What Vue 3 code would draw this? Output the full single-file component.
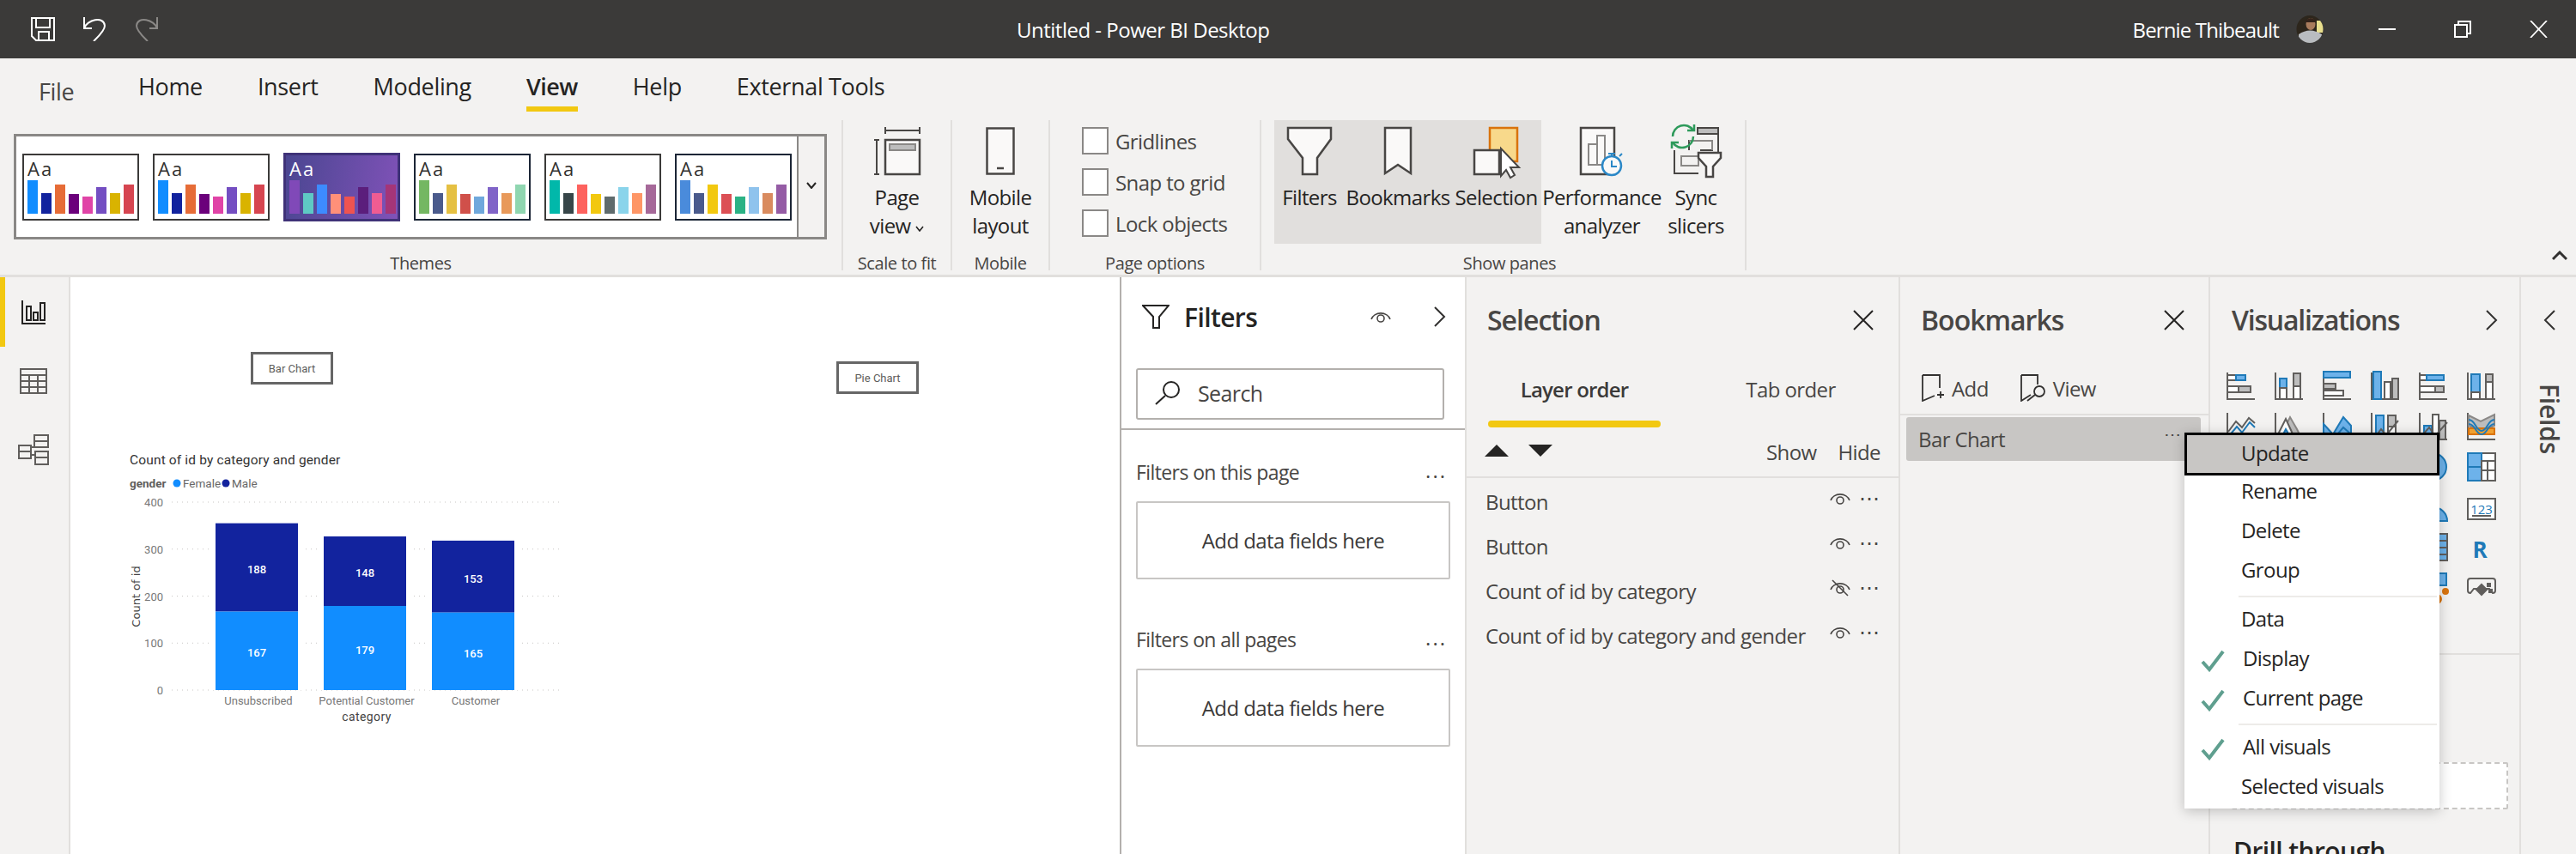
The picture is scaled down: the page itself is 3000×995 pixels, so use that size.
<script setup>
const D = '#605e5c', BL = '#6db2ea', BS = '#1f7ab8', G = '#bdbdbd', W = '#ffffff', O = '#d9730d'
const R = (x, y, w, h, f = W, s = D) => ({ d: `M${x} ${y}h${w}v${h}h${-w}z`, f, s })
const P = (d, f = 'none', s = D) => ({ d, f, s })
const ax = P('M1 1V32H33')

const tabs = ['Home', 'Insert', 'Modeling', 'View', 'Help', 'External Tools']

const base = ['#118dff', '#12239e', '#e66c37', '#6b007b', '#e044a7', '#744ec2', '#d9b300', '#d64550']
const themes = [
  { colors: base },
  { colors: base },
  { colors: ['#8049b8', '#5ec9c4', '#3d8bff', '#ff9079', '#ef5350', '#5b1e7c', '#f05c92', '#a43578'], dark: true },
  { colors: ['#74b762', '#4a5a8c', '#e5c042', '#d0504a', '#6fa8dc', '#8064c8', '#e8995a', '#8fd6b0'], navy: true },
  { colors: ['#01b8aa', '#374649', '#fd625e', '#f2c80f', '#5f6b6d', '#8ad4eb', '#fe9666', '#a66999'] },
  { colors: ['#4a8bdb', '#4a5a8c', '#f2c80f', '#dc4f55', '#2bb285', '#8fc3ed', '#d98b5f', '#955ca5'], navy: true }
]
const themeHeights = [39, 24, 34, 23, 20, 31, 24, 34]

const checks = ['Gridlines', 'Snap to grid', 'Lock objects']

const layers = [
  { name: 'Button' },
  { name: 'Button' },
  { name: 'Count of id by category', hidden: true },
  { name: 'Count of id by category and gender' }
]

const menu = [
  { label: 'Update', hover: true },
  { label: 'Rename' },
  { label: 'Delete' },
  { label: 'Group', sepAfter: true },
  { label: 'Data' },
  { label: 'Display', check: true },
  { label: 'Current page', check: true, sepAfter: true },
  { label: 'All visuals', check: true },
  { label: 'Selected visuals' }
]

const Y = v => 804 - v * 0.5475
const grid = [400, 300, 200, 100, 0]
const series = [
  { name: 'Unsubscribed', x: 251, f: 167, m: 188, fy: 760, my: 663, cx: 301 },
  { name: 'Potential Customer', x: 377, f: 179, m: 148, fy: 757, my: 667, cx: 427 },
  { name: 'Customer', x: 503, f: 165, m: 153, fy: 761, my: 674, cx: 554 }
]

const vizIcons = [
  [ax, R(1, 4, 10, 6), R(11, 4, 11, 6, BL, BS), R(1, 17, 13, 7), R(14, 17, 14, 7, G)],
  [ax, R(6, 8, 8, 11, BL, BS), R(6, 19, 8, 13), R(22, 2, 8, 15, G), R(22, 17, 8, 15)],
  [P('M1 0V32H33'), R(1, 0, 31, 7, BL, BS), R(1, 14, 14, 6, G), R(1, 22, 23, 6)],
  [ax, R(3, 0, 9, 32, BL, BS), R(16, 12, 7, 20), R(25, 8, 7, 24, G)],
  [ax, R(1, 4, 8, 6), R(9, 4, 20, 6, BL, BS), R(1, 17, 18, 7), R(19, 17, 10, 7, G)],
  [ax, R(5, 3, 10, 21, BL, BS), R(5, 24, 10, 8), R(22, 3, 8, 9, G), R(22, 12, 8, 20)],
  [ax, P('M2 23L11 11L18 18L26 7L33 13'), P('M2 29L12 17L18 24L27 12L33 18', 'none', BS)],
  [ax, P('M14 32L10 22L18 6L26 20L32 32', G, '#8a8886'), P('M1 32L13 8L24 32Z', W), P('M7 32L13 20L20 32Z', BL, BS)],
  [ax, P('M1 14L12 26L24 6L33 16V32H1Z', BL, BS), P('M1 24L12 32L24 18L33 26', 'none', BS)],
  [ax, R(6, 4, 9, 28, BL, BS), R(20, 4, 9, 13, G), R(20, 17, 9, 15), P('M3 32L12 20L18 27L32 10')],
  [ax, R(6, 16, 9, 16, BL, BS), R(16, 3, 7, 29), R(24, 10, 7, 22, G), P('M3 28L12 18L19 28L33 12')],
  [P('M1 1V32H33'), P('M2 4L16 11L32 3V16L16 22L2 16Z', G, '#8a8886'), R(2, 19, 30, 7, '#f0a030', O), P('M2 9C10 9 10 22 17 22S24 9 32 9', 'none', BS), P('M2 14C10 14 10 26 17 26S24 14 32 14', 'none', BS)],
  [], [], [], [], [P('M16 1A16 16 0 1 1 16 33A16 16 0 1 1 16 1Z', BL, BS)],
  [R(1, 1, 32, 32, W), R(1, 1, 16, 16, BL, BS), R(1, 17, 16, 16, BL, BS), R(17, 10, 16, 23, W), P('M17 10H33M24 10V33M17 21H33')],
  [], [], [], [], [P('M1 33A16 16 0 0 1 33 33Z', BL, BS)],
  [R(1, 7, 32, 24, W), P('M6 27H28', 'none', D)],
  [], [], [], [], [R(1, 1, 32, 31, BL, D), P('M1 9H33M1 17H33M1 25H33M10 1V32')], [],
  [], [], [], [], [R(10, 0, 22, 14, BL, BS), { d: 'M28 21a3 3 0 1 0 6 0a3 3 0 1 0-6 0M16 30a5 5 0 1 0 10 0a5 5 0 1 0-10 0', f: O, s: O }],
  [P('M4 6H30Q33 6 33 9V20Q33 23 30 23L26 18H8L4 23Q1 23 1 20V9Q1 6 4 6Z'), P('M17 13L23 19L17 25L11 19Z', D, D), R(24, 12, 3, 3, D, D), R(26, 19, 3, 3, D, D)]
]
</script>

<template>
  <div class="app">
    <header class="titlebar">
      <div class="qa">
        <svg class="qa-save" width="28" height="28" viewBox="0 0 28 28"><path d="M1 1H27V27H6L1 22Z M6 1V12H22V1 M9 27V17H21V27" fill="none" stroke="#fff" stroke-width="2"/></svg>
        <svg width="27" height="28" viewBox="0 0 27 28"><path d="M1 0V13H10 M1 13C4 3 24 -2 25 10C25 16 16 24 12 28" fill="none" stroke="#fff" stroke-width="2"/></svg>
        <svg width="27" height="28" viewBox="0 0 27 28"><path d="M26 0V13H17 M26 13C23 3 3 -2 2 10C2 16 11 24 15 28" fill="none" stroke="#8a8886" stroke-width="2"/></svg>
      </div>
      <div class="title">Untitled - Power BI Desktop</div>
      <div class="tb-right">
        <span class="user">Bernie Thibeault</span>
        <svg class="avatar" width="32" height="32" viewBox="0 0 32 32">
          <defs><clipPath id="av"><ellipse cx="16" cy="16" rx="15.5" ry="16"/></clipPath></defs>
          <g clip-path="url(#av)">
            <rect width="32" height="32" fill="#2d261c"/>
            <rect x="24" y="6" width="8" height="14" fill="#e9df8e"/>
            <ellipse cx="17" cy="10" rx="5.5" ry="7" fill="#a97b5c"/>
            <path d="M11 6Q17 0 23 6V8H11Z" fill="#33231a"/>
            <path d="M3 32V22Q16 13 30 22V32Z" fill="#b9bcc0"/>
          </g>
        </svg>
        <span class="win-min"></span>
        <svg width="20" height="20" viewBox="0 0 20 20"><path d="M5 4V1H19V15H15 M1 5H15V19H1Z" fill="none" stroke="#fff" stroke-width="2"/></svg>
        <svg width="21" height="20" viewBox="0 0 21 20"><path d="M1 0L20 20M20 0L1 20" stroke="#fff" stroke-width="1.8"/></svg>
      </div>
    </header>

    <section class="ribbon">
      <nav class="tabs">
        <span class="tab file">File</span>
        <span v-for="t in tabs" :key="t" class="tab" :class="{ active: t === 'View' }">{{ t }}</span>
      </nav>
      <div class="groups">
        <div class="group g-themes">
          <div class="body">
            <div class="gallery">
              <div class="thumbs">
                <div v-for="(th, i) in themes" :key="i" class="thumb" :class="{ dark: th.dark, navy: th.navy }">
                  <span class="aa">Aa</span>
                  <div class="tbars">
                    <i v-for="(c, j) in th.colors" :key="j" :style="{ background: c, height: themeHeights[j] + 'px' }"></i>
                  </div>
                </div>
              </div>
              <div class="gal-more"><svg width="12" height="8" viewBox="0 0 12 8"><path d="M1 1L6 7L11 1" fill="none" stroke="#252423" stroke-width="2"/></svg></div>
            </div>
          </div>
          <div class="glabel">Themes</div>
        </div>

        <div class="group g-scale">
          <div class="body">
            <div class="rbtn full">
              <svg width="54" height="56" viewBox="0 0 54 56">
                <path d="M13 0V8M53 0V8M13 4H53M3 15V55M0 15H6M0 55H6" fill="none" stroke="#484644" stroke-width="2"/>
                <rect x="13" y="15" width="40" height="40" fill="#faf9f8" stroke="#484644" stroke-width="2.5"/>
                <rect x="18" y="20" width="30" height="7" fill="#bdbdbd" stroke="#8a8886" stroke-width="2"/>
              </svg>
              <div class="rtext">Page<br />view <svg width="10" height="7" viewBox="0 0 10 7"><path d="M1 1L5 6L9 1" fill="none" stroke="#252423" stroke-width="1.6"/></svg></div>
            </div>
          </div>
          <div class="glabel">Scale to fit</div>
        </div>

        <div class="group g-mobile">
          <div class="body">
            <div class="rbtn full">
              <svg width="34" height="56" viewBox="0 0 34 56">
                <rect x="1.5" y="1.5" width="31" height="53" fill="#faf9f8" stroke="#484644" stroke-width="2.5"/>
                <path d="M13 48H21" stroke="#484644" stroke-width="2.5"/>
              </svg>
              <div class="rtext">Mobile<br />layout</div>
            </div>
          </div>
          <div class="glabel">Mobile</div>
        </div>

        <div class="group g-options">
          <div class="body">
            <div class="checks">
              <label v-for="c in checks" :key="c" class="check"><i></i>{{ c }}</label>
            </div>
          </div>
          <div class="glabel">Page options</div>
        </div>

        <div class="group g-panes">
          <div class="body panes-row">
            <div class="hl">
              <div class="rbtn w-filters">
                <svg width="52" height="56" viewBox="0 0 52 56"><path d="M1 1H51V14L35 36V55H18V36L1 14Z" fill="#faf9f8" stroke="#484644" stroke-width="2.5"/></svg>
                <div class="rtext">Filters</div>
              </div>
              <div class="rbtn w-book">
                <svg width="32" height="56" viewBox="0 0 32 56"><path d="M1 1H31V54L16 44L1 54Z" fill="#faf9f8" stroke="#484644" stroke-width="2.5"/></svg>
                <div class="rtext">Bookmarks</div>
              </div>
              <div class="rbtn w-sel">
                <svg width="54" height="56" viewBox="0 0 54 56" class="sel-ico">
                  <rect x="19" y="1" width="32" height="39" fill="#f8d98b" stroke="#d9730d" stroke-width="2.5"/>
                  <rect x="1" y="27" width="29" height="28" fill="#faf9f8" stroke="#484644" stroke-width="2.5"/>
                  <path d="M32 25V57L38 50L43 59L48 56L43 47L53 47Z" fill="#fff" stroke="#484644" stroke-width="2"/>
                </svg>
                <div class="rtext">Selection</div>
              </div>
            </div>
            <div class="rbtn w-perf">
              <svg width="52" height="56" viewBox="0 0 52 56" class="over">
                <rect x="1" y="1" width="39" height="54" fill="#faf9f8" stroke="#484644" stroke-width="2.5"/>
                <path d="M10 44V20H20V44ZM20 20V10H29V44H20" fill="none" stroke="#8a8886" stroke-width="2"/>
                <circle cx="37" cy="45" r="11" fill="#faf9f8" stroke="#2b88c7" stroke-width="2.5"/>
                <path d="M37 39V46H43M33 31H41M37 31V34M46 34L49 31" fill="none" stroke="#2b88c7" stroke-width="2"/>
              </svg>
              <div class="rtext">Performance<br />analyzer</div>
            </div>
            <div class="rbtn w-sync">
              <svg width="60" height="56" viewBox="0 5 60 56" class="sync-ico">
                <path d="M5 32V59H33M22 32V21H49V32H35M56 6V35M13 39H33V50H13Z" fill="none" stroke="#484644" stroke-width="2"/>
                <path d="M22 21H49V32" fill="none" stroke="#8a8886" stroke-width="2"/>
                <path d="M13 39H33V50H13Z" fill="none" stroke="#8a8886" stroke-width="2"/>
                <rect x="32" y="6" width="24" height="7" fill="#bdbdbd" stroke="#484644" stroke-width="2"/>
                <path d="M3 16A13 13 0 0 1 27 9M27 16A13 13 0 0 1 3 23" fill="none" stroke="#2e9a5b" stroke-width="2.5"/>
                <path d="M20 9H28V2M10 23H2V30" fill="none" stroke="#2e9a5b" stroke-width="2.5"/>
                <path d="M33 35H59V41L50 51V63H42V51L33 41Z" fill="#faf9f8" stroke="#484644" stroke-width="2.5"/>
              </svg>
              <div class="rtext">Sync<br />slicers</div>
            </div>
          </div>
          <div class="glabel">Show panes</div>
        </div>

        <svg class="collapse" width="18" height="12" viewBox="0 0 18 12"><path d="M1 10L9 2L17 10" fill="none" stroke="#323130" stroke-width="3"/></svg>
      </div>
    </section>

    <main class="main">
      <aside class="nav">
        <div class="nav-item on">
          <svg width="28" height="28" viewBox="0 0 28 28"><path d="M1 0V27H28" fill="none" stroke="#252423" stroke-width="2"/><path d="M6 7H11V23H6ZM14 14H19V23H14ZM22 3H27V23H22Z" fill="none" stroke="#252423" stroke-width="2"/></svg>
        </div>
        <div class="nav-item">
          <svg width="32" height="30" viewBox="0 0 32 30"><path d="M1 1H31V29H1ZM1 8H31M1 15H31M1 22H31M11 8V29M21 8V29" fill="none" stroke="#605e5c" stroke-width="2"/></svg>
        </div>
        <div class="nav-item">
          <svg width="36" height="36" viewBox="0 0 36 36"><path d="M19 1H35V15H19ZM19 8H35M1 13H15V28H1ZM1 20H15M20 20H35V35H20ZM20 27H35M15 15H19M15 24H20" fill="none" stroke="#605e5c" stroke-width="2"/></svg>
        </div>
      </aside>

      <div class="canvas">
        <div class="vbtn bar-btn">Bar Chart</div>
        <div class="vbtn pie-btn">Pie Chart</div>
        <svg class="chart" width="530" height="330" viewBox="142 520 530 330">
          <text x="151" y="541" class="c-title">Count of id by category and gender</text>
          <text x="151" y="568" class="c-legend-h">gender</text>
          <circle cx="206" cy="563" r="4.5" fill="#118dff"/>
          <text x="213" y="568" class="c-legend">Female</text>
          <circle cx="263" cy="563" r="4.5" fill="#12239e"/>
          <text x="270" y="568" class="c-legend">Male</text>

          <g v-for="g in grid" :key="g">
            <line x1="200" x2="655" :y1="Y(g)" :y2="Y(g)" stroke="#c8c6c4" stroke-width="1" stroke-dasharray="1 5"/>
            <text x="190" :y="Y(g) + 5" text-anchor="end" class="c-axis">{{ g }}</text>
          </g>
          <text transform="translate(163 695) rotate(-90)" text-anchor="middle" class="c-ylabel">Count of id</text>

          <g v-for="s in series" :key="s.name">
            <rect :x="s.x - 5" :y="Y(s.f + s.m)" width="106" :height="s.f * 0.5475 + s.m * 0.5475" fill="#fff"/>
            <rect :x="s.x" :y="Y(s.f + s.m)" width="96" :height="s.m * 0.5475" fill="#12239e"/>
            <rect :x="s.x" :y="Y(s.f)" width="96" :height="s.f * 0.5475" fill="#118dff"/>
            <text :x="s.x + 48" :y="s.my + 5" text-anchor="middle" class="c-val">{{ s.m }}</text>
            <text :x="s.x + 48" :y="s.fy + 5" text-anchor="middle" class="c-val">{{ s.f }}</text>
            <text :x="s.cx" y="821" text-anchor="middle" class="c-axis">{{ s.name }}</text>
          </g>
          <text x="427" y="840" text-anchor="middle" class="c-xlabel">category</text>
        </svg>
      </div>

      <section class="filters">
        <div class="f-head">
          <svg width="32" height="28" viewBox="0 0 32 28"><path d="M1 1H31L20 14V27H13V14Z" fill="none" stroke="#252423" stroke-width="2"/></svg>
          <span class="f-title">Filters</span>
          <svg class="f-eye" width="24" height="16" viewBox="0 0 24 16"><path d="M1 11A11.5 10 0 0 1 23 11" fill="none" stroke="#484644" stroke-width="1.6"/><circle cx="12" cy="10" r="4" fill="none" stroke="#484644" stroke-width="1.6"/></svg>
          <svg class="f-chev" width="15" height="24" viewBox="0 0 15 24"><path d="M2 1L13 12L2 23" fill="none" stroke="#323130" stroke-width="2"/></svg>
        </div>
        <div class="search">
          <svg width="30" height="28" viewBox="0 0 30 28"><circle cx="19" cy="10" r="9" fill="none" stroke="#252423" stroke-width="2"/><path d="M12 17L1 27" stroke="#252423" stroke-width="2"/></svg>
          <span>Search</span>
        </div>
        <div class="f-divider"></div>
        <div class="f-sec first"><span>Filters on this page</span><span class="dots">...</span></div>
        <div class="f-box">Add data fields here</div>
        <div class="f-sec"><span>Filters on all pages</span><span class="dots">...</span></div>
        <div class="f-box">Add data fields here</div>
      </section>

      <section class="pane selection">
        <div class="p-head">
          <span>Selection</span>
          <svg width="24" height="24" viewBox="0 0 24 24"><path d="M1 1L23 23M23 1L1 23" stroke="#252423" stroke-width="2"/></svg>
        </div>
        <div class="s-tabs">
          <div class="s-tab on">Layer order<i></i></div>
          <div class="s-tab">Tab order</div>
        </div>
        <div class="s-tools">
          <svg width="28" height="14" viewBox="0 0 28 14"><path d="M14 0L28 14H0Z" fill="#252423"/></svg>
          <svg class="down" width="28" height="14" viewBox="0 0 28 14"><path d="M14 14L28 0H0Z" fill="#252423"/></svg>
          <span class="show">Show</span>
          <span class="hide">Hide</span>
        </div>
        <div class="layers">
          <div v-for="(l, i) in layers" :key="i" class="layer">
            <span>{{ l.name }}</span>
            <svg class="l-eye" width="24" height="20" viewBox="0 0 24 20">
              <path d="M1 12A11.5 10 0 0 1 23 12" fill="none" stroke="#484644" stroke-width="1.6"/>
              <circle cx="12" cy="12" r="4" fill="none" stroke="#484644" stroke-width="1.6"/>
              <path v-if="l.hidden" d="M3 1L21 19" stroke="#484644" stroke-width="1.6"/>
            </svg>
            <span class="l-dots">&#8943;</span>
          </div>
        </div>
      </section>

      <section class="pane bookmarks">
        <div class="p-head">
          <span>Bookmarks</span>
          <svg width="24" height="24" viewBox="0 0 24 24"><path d="M1 1L23 23M23 1L1 23" stroke="#252423" stroke-width="2"/></svg>
        </div>
        <div class="b-tools">
          <svg width="26" height="32" viewBox="0 0 26 32"><path d="M1 1H21V16M15 25L1 31V1M18 24H26M22 20V28" fill="none" stroke="#323130" stroke-width="1.8"/></svg>
          <span class="b-add">Add</span>
          <svg class="b-vi" width="30" height="32" viewBox="0 0 30 32"><path d="M1 1H20V12M12 24L1 31V1" fill="none" stroke="#323130" stroke-width="1.8"/><circle cx="22" cy="20" r="6" fill="none" stroke="#323130" stroke-width="1.8"/><path d="M17 24L8 31" stroke="#323130" stroke-width="1.8"/></svg>
          <span class="b-view">View</span>
        </div>
        <div class="b-row"><span>Bar Chart</span><span class="b-dots">&#8943;</span></div>
      </section>

      <section class="pane viz">
        <div class="p-head">
          <span>Visualizations</span>
          <svg width="15" height="24" viewBox="0 0 15 24"><path d="M2 1L13 12L2 23" fill="none" stroke="#323130" stroke-width="2"/></svg>
        </div>
        <div class="viz-grid">
          <div v-for="(icon, i) in vizIcons" :key="i" class="viz-cell">
            <svg width="34" height="34" viewBox="0 0 34 34">
              <path v-for="(s, j) in icon" :key="j" :d="s.d" :fill="s.f" :stroke="s.s" stroke-width="2"/>
              <text v-if="i === 23" x="17" y="25" text-anchor="middle" class="v-num">123</text>
              <text v-if="i === 29" x="15" y="29" text-anchor="middle" class="v-r">R</text>
            </svg>
          </div>
        </div>
        <div class="v-divider"></div>
        <div class="v-drop"></div>
        <div class="v-drill">Drill through</div>
      </section>

      <aside class="fields">
        <svg width="15" height="24" viewBox="0 0 15 24"><path d="M13 1L2 12L13 23" fill="none" stroke="#323130" stroke-width="2"/></svg>
        <span>Fields</span>
      </aside>
    </main>

    <div class="menu">
      <template v-for="m in menu" :key="m.label">
        <div class="m-row" :class="{ hover: m.hover, checked: m.check }">
          <svg v-if="m.check" width="28" height="26" viewBox="0 0 28 26"><path d="M2 14L10 23L26 2" fill="none" stroke="#5f9f8f" stroke-width="4"/></svg>
          <span>{{ m.label }}</span>
        </div>
        <div v-if="m.sepAfter" class="m-sep"></div>
      </template>
    </div>
  </div>
</template>

<style>
html, body { margin: 0; background: #fff; }
</style>

<style scoped>
* { box-sizing: border-box; }
.app {
  position: relative;
  width: 3000px;
  height: 995px;
  overflow: hidden;
  display: flex;
  flex-direction: column;
  font-family: "Open Sans", "Liberation Sans", sans-serif;
  letter-spacing: -0.6px;
  color: #252423;
  background: #fff;
}

/* Title bar */
.titlebar {
  height: 68px;
  flex: none;
  background: #3b3a39;
  display: flex;
  align-items: center;
  padding: 0 33px 0 36px;
  color: #fff;
}
.qa { display: flex; gap: 33px; align-items: center; width: 148px; margin-right: 1000px; }
.title { font-size: 24px; white-space: nowrap; letter-spacing: -0.5px; }
.tb-right { margin-left: auto; display: flex; align-items: center; }
.user { font-size: 24px; letter-spacing: -0.85px; }
.avatar { margin-left: 20px; }
.win-min { width: 20px; height: 2px; background: #fff; margin: 0 68px 0 64px; }
.tb-right svg:last-child { margin-left: 68px; }

/* Ribbon */
.ribbon { height: 252px; flex: none; background: #f3f2f1; display: flex; flex-direction: column; }
.tabs { height: 72px; flex: none; display: flex; gap: 64px; padding: 13px 0 0 161px; position: relative; }
.tab { font-size: 27px; line-height: 40px; height: 49px; white-space: nowrap; padding-bottom: 3px; letter-spacing: -0.35px; }
.tab.active { border-bottom: 6px solid #f2c811; font-weight: 600; letter-spacing: -0.5px; }
.tab.file { position: absolute; left: 45px; top: 19px; color: #484644; }
.groups { display: flex; height: 175px; position: relative; }
.group { flex: none; display: flex; flex-direction: column; border-right: 2px solid #e1dfdd; }
.body { flex: 1; min-height: 0; }
.glabel { height: 16px; line-height: 16px; font-size: 20px; text-align: center; color: #484644; white-space: nowrap; letter-spacing: -0.4px; margin-bottom: 0; }
.g-themes { width: 982px; padding-left: 16px; }
.g-themes .glabel { padding-right: 16px; }
.g-scale { width: 127px; }
.g-mobile { width: 114px; }
.g-options { width: 246px; }
.g-panes { width: 565px; padding-left: 15px; }

.gallery { margin-top: 16px; width: 947px; height: 123px; border: 3px solid #8a8886; background: #fff; display: flex; }
.thumbs { flex: 1; display: flex; gap: 16px; padding: 20px 0 0 7px; }
.thumb { width: 136px; height: 78px; border: 2px solid #3b3a39; background: #fff; padding: 0 0 6px 4px; display: flex; flex-direction: column; justify-content: space-between; overflow: hidden; }
.thumb.navy { border-color: #1b2536; }
.thumb.dark { border: 3px solid #3f3278; background: linear-gradient(100deg, #4a4691, #8052b8); height: 80px; margin-top: -1px; }
.aa { font-size: 22px; line-height: 30px; letter-spacing: 2px; color: #323130; }
.dark .aa { color: #fff; }
.tbars { display: flex; align-items: flex-end; gap: 4.5px; margin-top: -6px; }
.tbars i { width: 11.5px; display: block; flex: none; }
.gal-more { width: 32px; border-left: 2px solid #8a8886; background: #f3f2f1; display: flex; align-items: center; justify-content: center; padding-bottom: 4px; }

.rbtn { display: flex; flex-direction: column; align-items: center; padding-top: 8px; flex: none; }
.rbtn.full { width: 100%; }
.rbtn > svg { flex: none; display: block; height: 56px; overflow: visible; }
.rtext { margin-top: 9px; font-size: 24px; line-height: 33px; text-align: center; white-space: nowrap; }
.rtext svg { vertical-align: 2px; }

.checks { display: flex; flex-direction: column; gap: 16px; padding: 8px 0 0 37px; }
.check { display: flex; align-items: center; height: 32px; font-size: 24px; white-space: nowrap; color: #484644; }
.check i { width: 31px; height: 32px; border: 2px solid #8a8886; background: #fff; margin-right: 8px; flex: none; }

.panes-row { display: flex; align-items: flex-start; }
.hl { display: flex; width: 311px; height: 144px; background: #e1dfdd; }
.w-filters { width: 82px; }
.w-book { width: 124px; }
.w-sel { width: 105px; }
.w-perf { width: 141px; }
.w-sync { width: 78px; }
.collapse { position: absolute; right: 10px; top: 152px; }

/* Main */
.main { flex: 1; min-height: 0; display: flex; border-top: 3px solid #e1dfdd; }
.nav { width: 82px; flex: none; background: #f3f2f1; border-right: 2px solid #e1dfdd; }
.nav-item { height: 80px; display: flex; align-items: center; justify-content: center; padding-right: 2px; }
.nav-item.on { height: 81px; border-left: 6px solid #f2c811; padding-right: 8px; }

.canvas { width: 1222px; flex: none; position: relative; background: #fff; }
.vbtn {
  position: absolute;
  border: 3px solid #666;
  background: #fff;
  font-size: 13px;
  color: #605e5c;
  letter-spacing: 0;
  display: flex;
  align-items: center;
  justify-content: center;
  font-family: "Roboto", sans-serif;
}
.bar-btn { left: 210px; top: 87px; width: 96px; height: 38px; }
.pie-btn { left: 892px; top: 98px; width: 96px; height: 38px; }
.chart { position: absolute; left: 60px; top: 197px; }
.chart text { font-family: "Roboto", sans-serif; letter-spacing: 0; }
.chart .c-title { font-size: 15.5px; fill: #333; letter-spacing: 0.15px; }
.c-legend-h { font-size: 13.5px; font-weight: 700; fill: #605e5c; }
.c-legend { font-size: 13.5px; fill: #666; }
.c-axis { font-size: 13px; fill: #777; }
.chart .c-ylabel { font-size: 13px; fill: #444; font-family: "DejaVu Sans", sans-serif; }
.chart .c-xlabel { font-size: 14px; fill: #444; letter-spacing: 0.4px; }
.c-val { font-size: 13px; fill: #fff; font-weight: 500; }

/* Filters */
.filters { width: 404px; flex: none; background: #fff; border-left: 2px solid #b3b0ad; border-right: 2px solid #e1dfdd; }
.f-head { height: 92px; display: flex; align-items: center; padding-left: 24px; }
.f-title { font-size: 30px; font-weight: 600; margin-left: 17px; }
.f-eye { margin-left: auto; }
.f-chev { margin: 0 22px 0 49px; }
.search { margin: 14px 0 0 17px; width: 359px; height: 60px; border: 2px solid #b3b0ad; border-radius: 3px; display: flex; align-items: center; padding: 0 0 2px 20px; font-size: 25px; color: #484644; }
.search span { margin-left: 20px; }
.f-divider { height: 2px; background: #b3b0ad; margin-top: 10px; }
.f-sec { height: 40px; margin: 51px 15px 0 17px; display: flex; align-items: center; justify-content: space-between; font-size: 23px; color: #484644; padding-bottom: 3px; }
.f-sec.first { margin-top: 30px; }
.dots { font-size: 24px; letter-spacing: 2px; line-height: 20px; padding-right: 6px; position: relative; top: -2px; }
.f-box { margin: 13px 0 0 17px; width: 366px; height: 91px; border: 2px solid #c8c6c4; border-radius: 2px; display: flex; align-items: center; justify-content: center; font-size: 24px; color: #3b3a39; }

/* Panes */
.pane { flex: none; background: #f3f2f1; border-right: 2px solid #e1dfdd; overflow: hidden; }
.selection { width: 505px; }
.bookmarks { width: 361px; }
.viz { width: 362px; }
.p-head { height: 102px; display: flex; align-items: center; justify-content: space-between; padding: 0 29px 3px 24px; font-size: 32px; font-weight: 600; color: #484644; letter-spacing: -1px; }

.s-tabs { display: flex; padding-left: 25px; gap: 51px; height: 73px; font-size: 24px; text-align: center; }
.s-tab { width: 201px; line-height: 58px; position: relative; color: #484644; }
.s-tab.on { font-weight: 600; color: #3b3a39; letter-spacing: -0.8px; }
.s-tab i { display: block; height: 8px; margin-top: 7px; background: #f2c811; border-radius: 4px; }
.s-tools { height: 59px; border-bottom: 2px solid #e1dfdd; display: flex; align-items: center; padding: 0 21px 4px 21px; font-size: 24px; color: #484644; }
.s-tools span { position: relative; top: 2px; }
.s-tools .down { margin-left: 23px; }
.show { margin-left: auto; }
.hide { margin-left: 25px; }
.layers { padding-top: 1px; }
.layer { height: 52px; display: flex; align-items: center; padding-left: 22px; font-size: 24px; color: #484644; position: relative; }
.l-eye { margin-left: auto; margin-right: 10px; position: relative; top: -3px; flex: none; }
.l-dots { width: 24px; margin-right: 22px; font-size: 24px; line-height: 20px; letter-spacing: 0; position: relative; top: -4px; text-align: center; }

.bookmarks .p-head { padding-right: 28px; }
.b-tools { height: 59px; border-bottom: 2px solid #e1dfdd; display: flex; align-items: center; padding: 0 0 3px 25px; font-size: 24px; color: #484644; }
.b-add { margin-left: 9px; }
.b-vi { margin-left: 37px; }
.b-view { margin-left: 8px; }
.b-row { margin: 2px 9px 0 7px; height: 51px; background: #c8c6c4; border-radius: 3px; display: flex; align-items: center; justify-content: space-between; padding: 0 24px 0 14px; font-size: 24px; color: #484644; }
.b-dots { font-size: 20px; position: relative; top: -6px; }

.viz .p-head { padding: 0 25px 3px 25px; letter-spacing: -1.2px; }
.viz-grid { margin: 8px 0 0 19px; display: grid; grid-template-columns: repeat(6, 33px); column-gap: 23px; grid-auto-rows: 47px; }
.viz-cell svg { display: block; overflow: visible; }
.v-num { font-size: 15px; fill: #1f7ab8; letter-spacing: 0; font-family: "Open Sans", sans-serif; }
.v-r { font-size: 26px; font-weight: 700; fill: #1f7ab8; letter-spacing: 0; font-family: "Open Sans", sans-serif; }
.v-divider { height: 2px; background: #e1dfdd; margin-top: 46px; }
.v-drop { margin: 125px 13px 0 25px; height: 55px; border: 2px dashed #c8c6c4; border-radius: 2px; background: #fff; }
.v-drill { margin: 29px 0 0 27px; font-size: 30px; font-weight: 600; line-height: 40px; letter-spacing: -0.6px; white-space: nowrap; }

.fields { flex: 1; background: #f3f2f1; display: flex; flex-direction: column; align-items: center; padding: 38px 0 0 3px; }
.fields span { writing-mode: vertical-rl; margin-top: 62px; font-size: 30px; font-weight: 600; color: #484644; letter-spacing: -0.2px; }

/* Menu */
.menu {
  position: absolute;
  left: 2544px;
  top: 504px;
  width: 297px;
  height: 438px;
  background: #fff;
  box-shadow: 0 3px 14px rgba(0, 0, 0, 0.22);
  display: flex;
  flex-direction: column;
  gap: 8px;
  font-size: 24px;
  color: #252423;
}
.m-row { height: 38px; display: flex; align-items: center; padding: 0 0 3px 66px; white-space: nowrap; flex: none; }
.m-row svg { position: relative; top: 3px; }
.m-row.hover { height: 50px; background: #c8c6c4; border: 3px solid #000; padding: 0 0 3px 63px; margin-bottom: -8px; }
.m-row.checked { padding-left: 19px; }
.m-row.checked span { margin-left: 21px; }
.m-sep { height: 2px; background: #edebe9; margin: 2px 3px -1px 63px; flex: none; }
</style>
